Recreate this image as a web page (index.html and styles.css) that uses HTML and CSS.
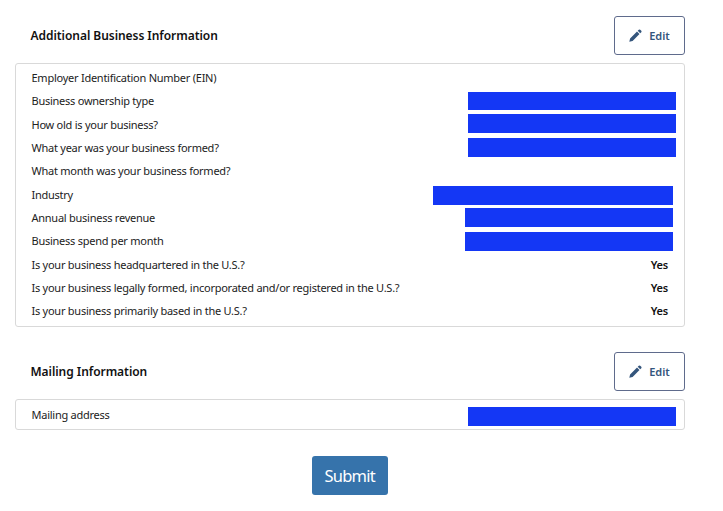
FILE: index.html
```html
<!DOCTYPE html>
<html lang="en">
<head>
  <meta charset="UTF-8" />
  <meta name="viewport" content="width=device-width, initial-scale=1.0"/>
  <title>Review Application</title>
  <link rel="stylesheet" href="styles.css">
</head>
<body>

<div class="content">
  <div class="section-header">
    <h2>Additional Business Information</h2>
    <button class="edit">
      <svg class="pencil" viewBox="0 0 13 13"><path d="M0.3 12.7 L1.1 9.4 L8 2.5 L10.5 5 L3.6 11.9 Z M8.7 1.8 L9.8 0.7 Q10.5 0.1 11.2 0.7 L12.3 1.8 Q12.9 2.5 12.3 3.2 L11.2 4.3 Z"/></svg>
      <span>Edit</span>
    </button>
  </div>
  <div class="card">
    <div class="row"><span class="label">Employer Identification Number (EIN)</span></div>
    <div class="row"><span class="label">Business ownership type</span><span class="redacted outer"></span></div>
    <div class="row"><span class="label">How old is your business?</span><span class="redacted outer raised"></span></div>
    <div class="row"><span class="label">What year was your business formed?</span><span class="redacted outer"></span></div>
    <div class="row"><span class="label">What month was your business formed?</span></div>
    <div class="row"><span class="label">Industry</span><span class="redacted wide"></span></div>
    <div class="row"><span class="label">Annual business revenue</span><span class="redacted"></span></div>
    <div class="row"><span class="label">Business spend per month</span><span class="redacted nudged"></span></div>
    <div class="row"><span class="label">Is your business headquartered in the U.S.?</span><span class="value">Yes</span></div>
    <div class="row"><span class="label">Is your business legally formed, incorporated and/or registered in the U.S.?</span><span class="value">Yes</span></div>
    <div class="row"><span class="label">Is your business primarily based in the U.S.?</span><span class="value">Yes</span></div>
  </div>

  <div class="section-header mailing">
    <h2>Mailing Information</h2>
    <button class="edit">
      <svg class="pencil" viewBox="0 0 13 13"><path d="M0.3 12.7 L1.1 9.4 L8 2.5 L10.5 5 L3.6 11.9 Z M8.7 1.8 L9.8 0.7 Q10.5 0.1 11.2 0.7 L12.3 1.8 Q12.9 2.5 12.3 3.2 L11.2 4.3 Z"/></svg>
      <span>Edit</span>
    </button>
  </div>
  <div class="card small">
    <div class="row"><span class="label">Mailing address</span><span class="redacted outer lowered"></span></div>
  </div>

  <div class="actions">
    <button class="submit">Submit</button>
  </div>
</div>

</body>
</html>
```

FILE: styles.css
```css
* {
  box-sizing: border-box;
  margin: 0;
  padding: 0;
}
body {
  font-family: "Noto Sans", sans-serif;
  background-color: #fff;
  color: #222;
}
.content {
  width: 670.5px;
  margin-left: 14.5px;
  padding-top: 16px;
}
.section-header {
  display: flex;
  justify-content: space-between;
  align-items: center;
  height: 39px;
  padding-left: 16px;
}
.section-header.mailing {
  margin-top: 25px;
}
h2 {
  margin-top: -1px;
  font-size: 12px;
  font-weight: 600;
  letter-spacing: -0.05px;
  color: #111;
}
.edit {
  display: flex;
  align-items: center;
  justify-content: center;
  gap: 7px;
  width: 71px;
  height: 39px;
  padding-bottom: 1px;
  background-color: #fff;
  border: 1px solid #5f6b8c;
  border-radius: 3px;
  color: #34557c;
  font-family: inherit;
  font-size: 11px;
  font-weight: 600;
}
.pencil {
  width: 13px;
  height: 13px;
  fill: #34557c;
}
.card {
  height: 264px;
  margin-top: 8px;
  padding: 2px 11px 0 16px;
  border: 1px solid #d9d9d9;
  border-radius: 3px;
}
.card.small {
  height: 31px;
  padding-top: 3px;
}
.row {
  display: flex;
  justify-content: space-between;
  align-items: center;
  height: 23.3px;
}
.label {
  font-size: 11px;
  letter-spacing: -0.25px;
  white-space: nowrap;
}
.value {
  margin-right: 5px;
  font-size: 11px;
  font-weight: 600;
  letter-spacing: -0.2px;
  color: #111;
}
.redacted {
  flex: none;
  width: 208px;
  height: 18.5px;
  background-color: #1437f5;
}
.redacted.wide {
  width: 240px;
  margin-top: 3px;
}
.redacted.outer {
  margin-right: -3px;
}
.redacted.raised {
  margin-top: -1px;
}
.redacted.nudged {
  margin-top: 2px;
}
.redacted.lowered {
  margin-top: 4px;
}
.actions {
  display: flex;
  justify-content: center;
  margin-top: 26px;
}
.submit {
  width: 76px;
  height: 39px;
  background-color: #3673ab;
  border: none;
  border-radius: 3px;
  color: #fff;
  font-family: inherit;
  font-size: 16.5px;
  letter-spacing: -0.75px;
}
```
